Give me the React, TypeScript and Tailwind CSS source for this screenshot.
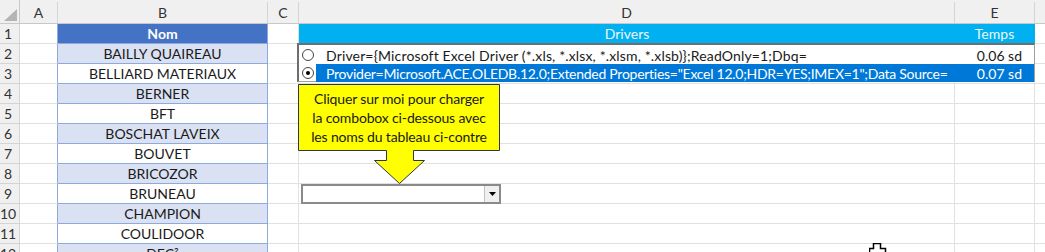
import React from 'react';

const names = [
  'BAILLY QUAIREAU',
  'BELLIARD MATERIAUX',
  'BERNER',
  'BFT',
  'BOSCHAT LAVEIX',
  'BOUVET',
  'BRICOZOR',
  'BRUNEAU',
  'CHAMPION',
  'COULIDOOR',
  'DEC²',
];

const font = { fontFamily: 'Lato, "Liberation Sans", sans-serif' };

function Radio({ checked }: { checked?: boolean }) {
  return (
    <div className="w-[12px] h-[12px] rounded-full border border-[#444] bg-white flex items-center justify-center">
      {checked && <div className="w-[4px] h-[4px] rounded-full bg-black" />}
    </div>
  );
}

export default function App() {
  const cols = ['A', 'B', 'C', 'D', 'E', ''];
  const rows = Array.from({ length: 12 }, (_, i) => i + 1);

  return (
    <div className="relative w-[1045px] h-[252px] overflow-hidden bg-white text-[14px] text-[#1a1a1a]" style={font}>
      <div className="grid grid-cols-[20px_38px_210px_31px_656px_80px_1fr] grid-rows-[24px_repeat(12,20px)]">
        { /* column headers */ }
        <div className="relative bg-[#f0f0f0] border-r border-b border-[#c8c8c8]">
          <svg className="absolute left-[4px] top-[9px]" width="13" height="12" viewBox="0 0 13 12">
            <polygon points="13,0 13,12 0,12" fill="#b4b4b4" />
          </svg>
        </div>
        {cols.map((c, i) => (
          <div
            key={c + i}
            className="bg-[#f0f0f0] border-b border-[#c8c8c8] flex items-center justify-center text-[#333] pt-[2px]"
          >
            <div className={`w-full h-full flex items-center justify-center ${i < 5 ? 'border-r border-[#d4d4d4]' : ''}`}>{c}</div>
          </div>
        ))}

        {rows.map((r) => {
          const name = r === 1 ? 'Nom' : names[r - 2];
          const band = r % 2 === 0;
          return (
            <React.Fragment key={r}>
              <div className="bg-[#f0f0f0] border-r border-b border-[#d4d4d4] flex items-center justify-center pr-[3px] text-[#333]">
                {r}
              </div>
              <div className="border-r border-b border-r-[#8ea9db] border-b-[#e1e1e1]" />
              {r === 1 ? (
                <div className="bg-[#4472c4] border-r border-b border-[#8ea9db] flex items-center justify-center text-white font-bold">
                  Nom
                </div>
              ) : (
                <div
                  className={`${band ? 'bg-[#d9e1f2]' : 'bg-white'} border-r border-b border-[#8ea9db] flex items-center justify-center`}
                >
                  {name}
                </div>
              )}
              <div className="border-r border-b border-[#e1e1e1]" />
              {r === 1 ? (
                <>
                  <div className="bg-[#00b0f0] border-b border-[#00b0f0] flex items-center justify-center text-[#eef6fb]">
                    Drivers
                  </div>
                  <div className="bg-[#00b0f0] border-r border-b border-[#00b0f0] flex items-center justify-center text-[#eef6fb]">
                    Temps
                  </div>
                </>
              ) : (
                <>
                  <div className="border-r border-b border-[#e1e1e1]" />
                  <div className="border-r border-b border-[#e1e1e1]" />
                </>
              )}
              <div className="border-b border-[#e1e1e1]" />
            </React.Fragment>
          );
        })}
      </div>

      { /* ActiveX list box over D2:E3 */ }
      <div className="absolute left-[297px] top-[43px] w-[738px] h-[39px] bg-white border-t-2 border-l-2 border-[#6e6e6e] border-r border-b border-r-[#a0a0a0] border-b-[#a0a0a0] flex flex-col pt-[1px]">
        <div className="h-[18px] flex items-center">
          <div className="w-[17px] flex justify-center">
            <Radio />
          </div>
          <div className="flex-1 flex items-center pl-[10px] pr-[12px]">
            <span className="flex-1 tracking-[0.15px]">Driver={'{'}Microsoft Excel Driver (*.xls, *.xlsx, *.xlsm, *.xlsb){'}'};ReadOnly=1;Dbq=</span>
            <span>0.06 sd</span>
          </div>
        </div>
        <div className="h-[18px] flex items-center">
          <div className="w-[17px] flex justify-center">
            <Radio checked />
          </div>
          <div className="flex-1 h-full bg-[#0078d7] text-white flex items-center pl-[10px] pr-[12px]">
            <span className="flex-1 tracking-[-0.27px]">Provider=Microsoft.ACE.OLEDB.12.0;Extended Properties="Excel 12.0;HDR=YES;IMEX=1";Data Source=</span>
            <span>0.07 sd</span>
          </div>
        </div>
      </div>

      { /* callout shape */ }
      <div className="absolute left-[297px] top-[83px] w-[204px] h-[102px]">
        <svg className="absolute inset-0" width="204" height="102" viewBox="297 83 204 102">
          <polygon
            points="298.5,84.5 499.5,84.5 499.5,150.5 413.5,150.5 413.5,160.5 424.5,160.5 399.5,183.5 374.5,160.5 386.5,160.5 386.5,150.5 298.5,150.5"
            fill="#ffff00"
            stroke="#2b3548"
            strokeWidth="1"
          />
        </svg>
        <div className="relative w-[204px] h-[68px] flex flex-col items-center justify-center leading-[19px] text-[#1a1a1a] tracking-[-0.15px]">
          <span>Cliquer sur moi pour charger</span>
          <span>la combobox ci-dessous avec</span>
          <span>les noms du tableau ci-contre</span>
        </div>
      </div>

      { /* combobox */ }
      <div className="absolute left-[301px] top-[184px] w-[200px] h-[20px] bg-white border-2 border-[#8a8a8a] flex justify-end">
        <div className="w-[15px] h-full bg-[#f0f0f0] border-l border-[#c0c0c0] flex items-center justify-center">
          <svg width="7" height="4" viewBox="0 0 7 4">
            <polygon points="0,0 7,0 3.5,4" fill="#000" />
          </svg>
        </div>
      </div>

      { /* mouse cursor */ }
      <svg className="absolute left-[869px] top-[243px]" width="18" height="12" viewBox="0 0 18 12">
        <polygon points="4.5,0.5 11.5,0.5 11.5,5.5 16.5,5.5 16.5,12 0.5,12 0.5,5.5 4.5,5.5" fill="#fff" stroke="#000" strokeWidth="1.5" />
      </svg>
    </div>
  );
}
